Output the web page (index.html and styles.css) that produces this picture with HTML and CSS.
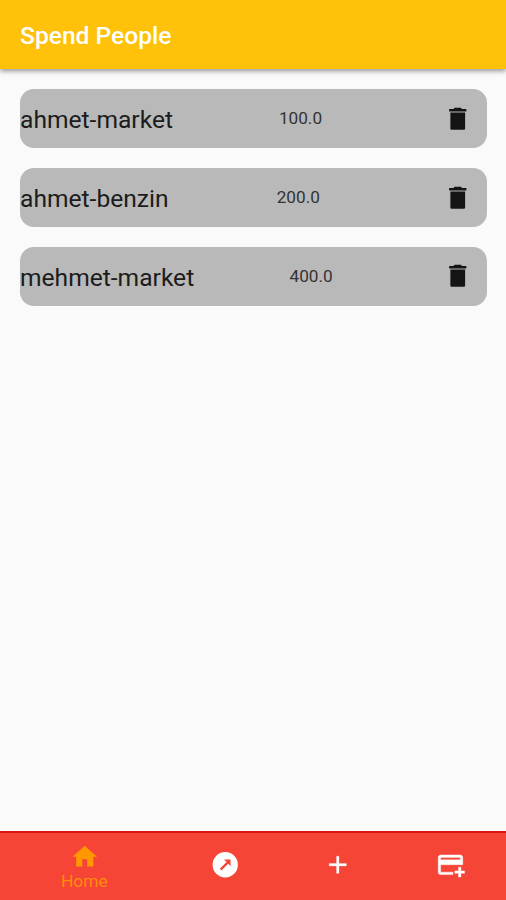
FILE: index.html
```html
<!DOCTYPE html>
<html lang="en">
<head>
<meta charset="utf-8">
<title>Spend People</title>
<link rel="stylesheet" href="styles.css">
</head>
<body>
<header class="app-bar"><h1 class="title">Spend People</h1></header>
<main class="list">
  <div class="row">
    <span class="name">ahmet-market</span><span class="amount">100.0</span>
    <button class="delete" aria-label="Delete"><svg class="icon" viewBox="0 0 24 24"><path d="M6 20q0 1 1 1h10q1 0 1-1V7H6zM19 4h-3.500l-1-1h-5l-1 1H5v2h14z"/></svg></button>
  </div>
  <div class="row">
    <span class="name">ahmet-benzin</span><span class="amount">200.0</span>
    <button class="delete" aria-label="Delete"><svg class="icon" viewBox="0 0 24 24"><path d="M6 20q0 1 1 1h10q1 0 1-1V7H6zM19 4h-3.500l-1-1h-5l-1 1H5v2h14z"/></svg></button>
  </div>
  <div class="row">
    <span class="name">mehmet-market</span><span class="amount">400.0</span>
    <button class="delete" aria-label="Delete"><svg class="icon" viewBox="0 0 24 24"><path d="M6 20q0 1 1 1h10q1 0 1-1V7H6zM19 4h-3.500l-1-1h-5l-1 1H5v2h14z"/></svg></button>
  </div>
</main>
<nav class="bottom-nav">
  <a class="item active"><svg class="icon" viewBox="0 0 24 24"><path d="M10 20v-6h4v6h5v-8h3L12 3 2 12h3v8z"/></svg><span class="label">Home</span></a>
  <a class="item"><svg class="icon" viewBox="0 0 24 24"><path fill-rule="evenodd" d="M12.400 1.700a10.300 10.300 0 1 0 0 20.600 10.300 10.300 0 0 0 0-20.600zM11.400 7.700h5.300V13l-1.900-1.900-5.500 5.500-1.300-1.300 5.500-5.500z"/></svg></a>
  <a class="item"><svg class="icon" viewBox="0 0 24 24"><path stroke="currentColor" stroke-width=".2" d="M19 13h-6v6h-2v-6H5v-2h6V5h2v6h6v2z"/></svg></a>
  <a class="item"><svg class="icon" viewBox="-.6 0 24 24"><path stroke="currentColor" stroke-width=".3" d="M20 4H4c-1.110 0-1.990.89-1.990 2L2 18c0 1.110.89 2 2 2h10v-2H4v-6h18V6c0-1.110-.89-2-2-2zm0 4H4V6h16v2zm3.500 9v2h-3v3h-2v-3h-3v-2h3v-3h2v3h3z"/></svg></a>
</nav>
</body>
</html>
```
FILE: styles.css
```css
* { box-sizing: border-box; }
body {
  margin: 0;
  height: 900px;
  display: flex;
  flex-direction: column;
  overflow: hidden;
  background: #fafafa;
  font-family: Roboto, "Liberation Sans", sans-serif;
}
.app-bar {
  flex: none;
  height: 69px;
  padding: 2px 20px 0;
  display: flex;
  align-items: center;
  background: #ffc10a;
  box-shadow: 0 2px 5px rgba(0, 0, 0, .42);
}
.title {
  margin: 0;
  font-size: 24.600px;
  font-weight: 500;
  color: #fff;
}
.list {
  flex: 1;
  display: flex;
  flex-direction: column;
  gap: 20px;
  padding: 20px 19px 0 20px;
}
.row {
  height: 58.900px;
  display: flex;
  align-items: center;
  justify-content: space-between;
  border-radius: 14px;
  background: #b9b9b9;
  color: #1c1c1c;
}
.name { font-size: 24.600px; padding-top: 2.200px; }
.amount { font-size: 17.200px; color: #333; }
.delete {
  width: 59px;
  height: 58.900px;
  padding: 0;
  border: 0;
  background: none;
  color: #141414;
  display: flex;
  align-items: center;
  justify-content: center;
}
.icon {
  width: 29.500px;
  height: 29.500px;
  display: block;
  fill: currentColor;
}
.bottom-nav {
  flex: none;
  height: 69px;
  display: flex;
  border-top: 2px solid #dc1411;
  background: #f64436;
  color: #fff;
}
.item {
  flex: 1;
  display: flex;
  flex-direction: column;
  align-items: center;
  justify-content: center;
  padding-bottom: 3px;
}
.active { flex: 1.5; padding-bottom: 0; color: #ff9800; }
.label { font-size: 17.400px; line-height: 20px; color: #ff8b0a; }
```
